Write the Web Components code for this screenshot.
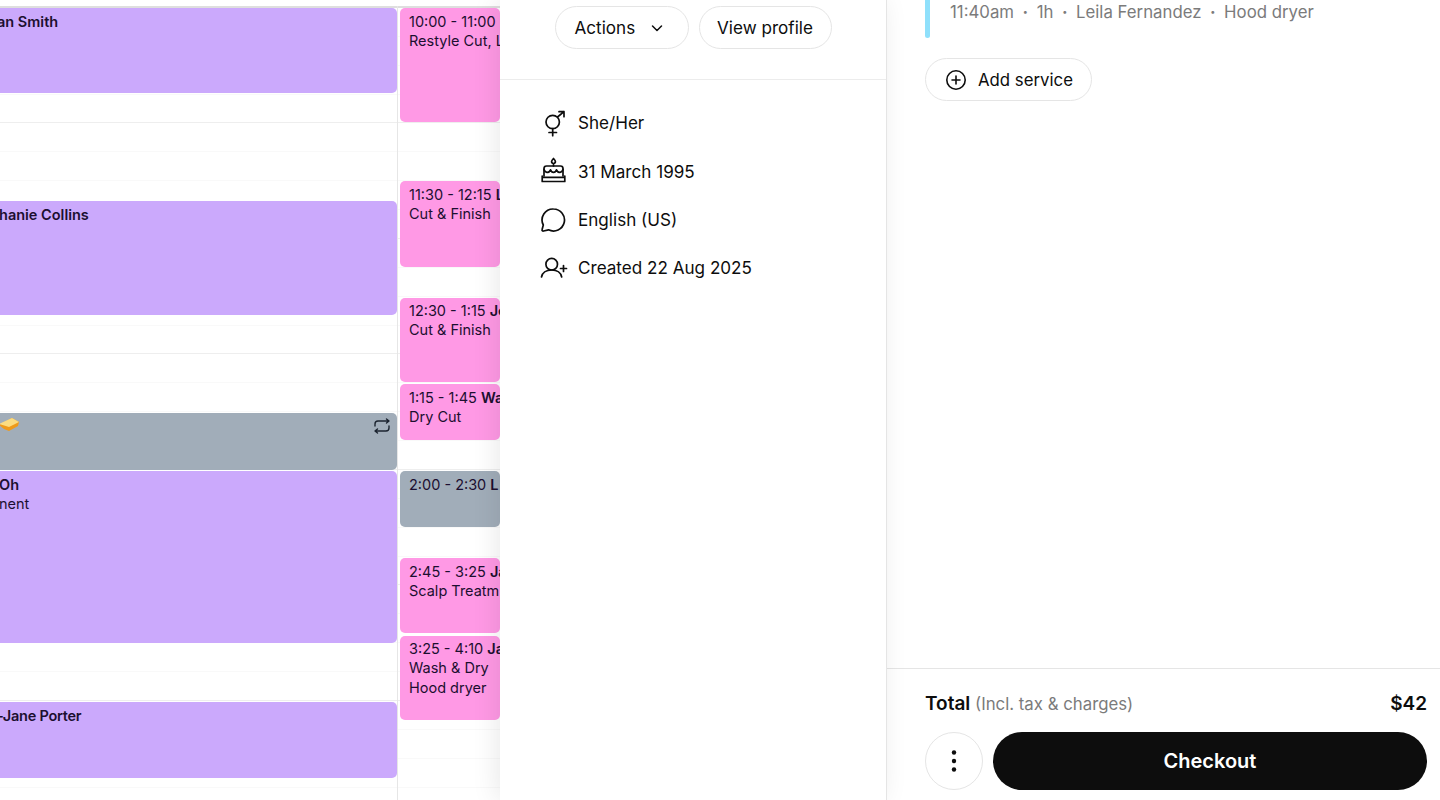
<!DOCTYPE html>
<html lang="en"><head><meta charset="utf-8"><title>Calendar</title>
<style>
html,body{margin:0;padding:0;background:#fff}
body{width:1440px;height:800px;overflow:hidden;display:flex;font-family:Inter,"Liberation Sans",sans-serif;color:#0d0d0d}
</style></head><body>
<template id="t-cal-event"><style>
:host{display:block;box-sizing:border-box;border-radius:5px;overflow:hidden;padding:4px 0 0 9px;font-size:14.5px;line-height:19.4px;color:#1c0f30;white-space:nowrap;position:relative}
:host([kind=purple]){background:#cba9fc;border-radius:0 5px 5px 0;padding-left:0}
:host([kind=pink]){background:#ff99e5}
:host([kind=grey]){background:#a1adb9}
:host([kind=greyrow]){background:#a1adb9;border-radius:0 5px 5px 0;padding-left:0}
</style><slot></slot></template>

<template id="t-cal-view"><style>
:host{display:block;flex:none;width:500px;height:800px;overflow:hidden;position:relative;background-color:#fff}
.grid{display:grid;grid-template-columns:397px 1px 102px;height:800px;box-sizing:border-box;padding-top:8px;
background:
 linear-gradient(#dedede,#dedede) 0 6px/100% 2px no-repeat,
 repeating-linear-gradient(to bottom,#eeeeee 0 1px,#fff 1px 29px,#f9f9f9 29px 30px,#fff 30px 58px,#f9f9f9 58px 59px,#fff 59px 87px,#f9f9f9 87px 88px,#fff 88px 115px,#eeeeee 115px 116px,#fff 116px 144px,#f9f9f9 144px 145px,#fff 145px 173px,#f9f9f9 173px 174px,#fff 174px 202px,#f9f9f9 202px 203px,#fff 203px 231px) 0 7px}
.c{display:flex;flex-direction:column;min-width:0}
.l{padding-right:.5px}
.line{background:#e6e6e6;margin-top:-2px}
.r{padding-left:2px}
</style><div class="grid"><div class="c l"><slot name="left"></slot></div><div class="line"></div><div class="c r"><slot name="right"></slot></div></div></template>

<template id="t-pill-button"><style>
:host{display:inline-flex;align-items:center;box-sizing:border-box;height:43px;border:1px solid #e5e5e5;border-radius:22px;background:#fff;font-size:17.1px;color:#0d0d0d;white-space:nowrap;flex:none}
</style><slot></slot></template>

<template id="t-info-row"><style>
:host{display:flex;align-items:center;gap:10px;height:28px;font-size:17.1px;color:#0d0d0d;white-space:nowrap}
::slotted(svg){flex:none}
</style><slot name="icon"></slot><slot></slot></template>

<template id="t-client-panel"><style>
:host{display:flex;flex-direction:column;flex:none;width:387px;height:800px;box-sizing:border-box;border-right:1px solid #e5e5e5;background:#fff;box-shadow:-4px 0 24px rgba(0,0,0,.085);position:relative}
.h{display:flex;justify-content:center;gap:10px;box-sizing:border-box;height:80px;padding:6px 0 0 0;border-bottom:1px solid #ececec}
.b{display:flex;flex-direction:column;gap:20.3px;padding:29px 0 0 40px}
</style><div class="h"><slot name="head"></slot></div><div class="b"><slot></slot></div></template>

<template id="t-cart-panel"><style>
:host{display:flex;flex-direction:column;flex:1;min-width:0;height:800px;background:#fff}
.m{flex:1;padding:0 13px 0 38px;min-height:0}
.svc{display:flex;height:38px;gap:20px;margin-bottom:20px}
.bar{width:5px;height:38px;border-radius:0 0 3px 3px;background:#8fe0fb}
.meta{font-size:16.8px;line-height:24px;color:#7b7b7b;white-space:nowrap;display:flex}
.f{border-top:1px solid #e5e5e5;height:132px;box-sizing:border-box;padding:19px 13px 0 38px}
.t{display:flex;justify-content:space-between;align-items:center;height:30px;font-size:16.8px;white-space:nowrap}
.t b{font-weight:600;font-size:19px}
.t span span{color:#7b7b7b}
.a{display:flex;gap:10px;margin-top:14px}
.more{width:58px;height:58px;box-sizing:border-box;border:1px solid #e5e5e5;border-radius:50%;display:flex;align-items:center;justify-content:center;flex:none}
.co{flex:1;height:58px;border-radius:29px;background:#0d0d0d;color:#fff;font-size:20px;font-weight:600;display:flex;align-items:center;justify-content:center}
</style>
<div class="m"><div class="svc"><div class="bar"></div><div class="meta"><slot name="meta"></slot></div></div><slot name="add"></slot></div>
<div class="f"><div class="t"><span><b>Total</b> <span>(Incl. tax &amp; charges)</span></span><b>$42</b></div>
<div class="a"><div class="more"><svg width="6" height="24" viewBox="0 0 6 24"><circle cx="3" cy="3.500" r="2.200" fill="#0d0d0d"/><circle cx="3" cy="12" r="2.200" fill="#0d0d0d"/><circle cx="3" cy="20.500" r="2.200" fill="#0d0d0d"/></svg></div><div class="co">Checkout</div></div></div></template>

<cal-view>
 <cal-event slot="left" kind="purple" style="height:85px"><b style="font-weight:600;margin-left:-3px;display:inline-block">an Smith</b></cal-event>
 <cal-event slot="left" kind="purple" style="margin-top:108px;height:114px"><b style="font-weight:600;margin-left:-1px;display:inline-block">hanie Collins</b></cal-event>
 <cal-event slot="left" kind="greyrow" style="margin-top:98px;height:57px;padding-top:3px"><svg width="20" height="16" viewBox="0 0 20 16" style="display:block;margin-top:1px"><path d="M-1 8 12 1l7 4-1 4-9 5-5-2z" fill="#ef9a1a"/><path d="M-1 7 12 1l7 4-10 5z" fill="#fbdc80"/></svg><svg width="18" height="16" viewBox="0 0 18 16" fill="none" stroke="#1c2430" stroke-width="1.4" stroke-linecap="round" stroke-linejoin="round" style="position:absolute;top:5px;right:6px"><path d="M2 8V6a3 3 0 0 1 3-3h11M13.500 1 16 3l-2.500 2M16 8v2a3 3 0 0 1-3 3H2M4.500 11 2 13l2.500 2"/></svg></cal-event>
 <cal-event slot="left" kind="purple" style="margin-top:1px;height:172px"><b style="font-weight:600;display:block;margin-left:-1px">Oh</b><span style="margin-left:-1px;display:inline-block">nent</span></cal-event>
 <cal-event slot="left" kind="purple" style="margin-top:59px;height:76px"><b style="font-weight:600;margin-left:-3px;letter-spacing:-.25px;display:inline-block">-Jane Porter</b></cal-event>

 <cal-event slot="right" kind="pink" style="height:114px">10:00 - 11:00<br>Restyle Cut, L</cal-event>
 <cal-event slot="right" kind="pink" style="margin-top:59px;height:86px">11:30 - 12:15 <b style="font-weight:600">L</b><br>Cut &amp; Finish</cal-event>
 <cal-event slot="right" kind="pink" style="margin-top:31px;height:84px;padding-top:3px">12:30 - 1:15 <b style="font-weight:600">Je</b><br>Cut &amp; Finish</cal-event>
 <cal-event slot="right" kind="pink" style="margin-top:2px;height:56px">1:15 - 1:45 <b style="font-weight:600">Wa</b><br>Dry Cut</cal-event>
 <cal-event slot="right" kind="grey" style="margin-top:31px;height:56px">2:00 - 2:30 <b style="font-weight:600">L</b></cal-event>
 <cal-event slot="right" kind="pink" style="margin-top:31px;height:75px">2:45 - 3:25 <b style="font-weight:600">Ja</b><br>Scalp Treatm</cal-event>
 <cal-event slot="right" kind="pink" style="margin-top:3px;height:84px;padding-top:3px">3:25 - 4:10 <b style="font-weight:600">Ja</b><br>Wash &amp; Dry<br>Hood dryer</cal-event>
</cal-view>

<client-panel>
 <pill-button slot="head" style="width:134px;padding-left:19px;gap:15px">Actions <svg width="14" height="14" viewBox="0 0 14 14" fill="none" stroke="#0d0d0d" stroke-width="1.5" stroke-linecap="round" stroke-linejoin="round"><path d="M2.500 5 7 9.500 11.500 5"/></svg></pill-button>
 <pill-button slot="head" style="width:133px;justify-content:center">View profile</pill-button>
 <info-row style="margin-top:-.5px"><svg slot="icon" width="28" height="28" viewBox="0 0 28 28" fill="none" stroke="#0d0d0d" stroke-width="1.7" stroke-linecap="round" stroke-linejoin="round"><circle cx="12.700" cy="13" r="6.700"/><path d="M12.700 19.700v7M9 23.500h7.500M17.500 8 24 2.700M19 2.700h5v5"/></svg>She/Her</info-row>
 <info-row style="margin-top:.5px"><svg slot="icon" width="28" height="28" viewBox="0 0 28 28" fill="none" stroke="#0d0d0d" stroke-width="1.7" stroke-linecap="round" stroke-linejoin="round"><path d="M13.500 1.500c1.200 1.300 1.900 2.200 1.900 3.100a1.900 1.900 0 0 1-3.800 0c0-.9.700-1.800 1.900-3.100zM13.500 6.500V9"/><path d="M2.200 24.500V19M24.800 24.500V19M2.200 24.500h22.600M2.200 20.300h22.600"/><path d="M4 19v-7.500A2.500 2.500 0 0 1 6.500 9h14a2.500 2.500 0 0 1 2.500 2.500V19"/><path d="M4 12.500c1.600 3.800 4.900 3.800 6.500.3 1.200 3.500 4.800 3.500 6 0 1.600 3.500 4.900 3.500 6.500-.3"/></svg>31 March 1995</info-row>
 <info-row><svg slot="icon" width="28" height="28" viewBox="0 0 28 28" fill="none" stroke="#0d0d0d" stroke-width="1.7" stroke-linecap="round" stroke-linejoin="round"><path d="M13.500 3a11 11 0 1 1-5 20.800L3.500 25c-1 .2-1.700-.6-1.400-1.500L3.300 19A11 11 0 0 1 13.500 3z"/></svg>English (US)</info-row>
 <info-row><svg slot="icon" width="28" height="28" viewBox="0 0 28 28" fill="none" stroke="#0d0d0d" stroke-width="1.7" stroke-linecap="round" stroke-linejoin="round"><circle cx="11.700" cy="10.200" r="5.800"/><path d="M1.500 23c1-4.500 5-7 10.200-7s9 2.500 10 7M23.500 11.500v6M20.500 14.500h6"/></svg>Created 22 Aug 2025</info-row>
</client-panel>

<cart-panel>
 <span slot="meta">11:40am<span style="margin:0 8.500px;font-weight:700">·</span>1h<span style="margin:0 8.500px;font-weight:700">·</span>Leila Fernandez<span style="margin:0 8.500px;font-weight:700">·</span>Hood dryer</span>
 <pill-button slot="add" style="width:167px;padding-left:19px;gap:11px;font-size:16.800px"><svg width="22" height="22" viewBox="0 0 22 22" fill="none" stroke="#0d0d0d" stroke-width="1.6" stroke-linecap="round"><circle cx="11" cy="11" r="9.200"/><path d="M11 7v8M7 11h8"/></svg>Add service</pill-button>
</cart-panel>

<script>
function def(name){customElements.define(name,class extends HTMLElement{constructor(){super();this.attachShadow({mode:'open'}).appendChild(document.getElementById('t-'+name).content.cloneNode(true));}});}
['cal-event','cal-view','pill-button','info-row','client-panel','cart-panel'].forEach(def);
</script>
</body></html>
